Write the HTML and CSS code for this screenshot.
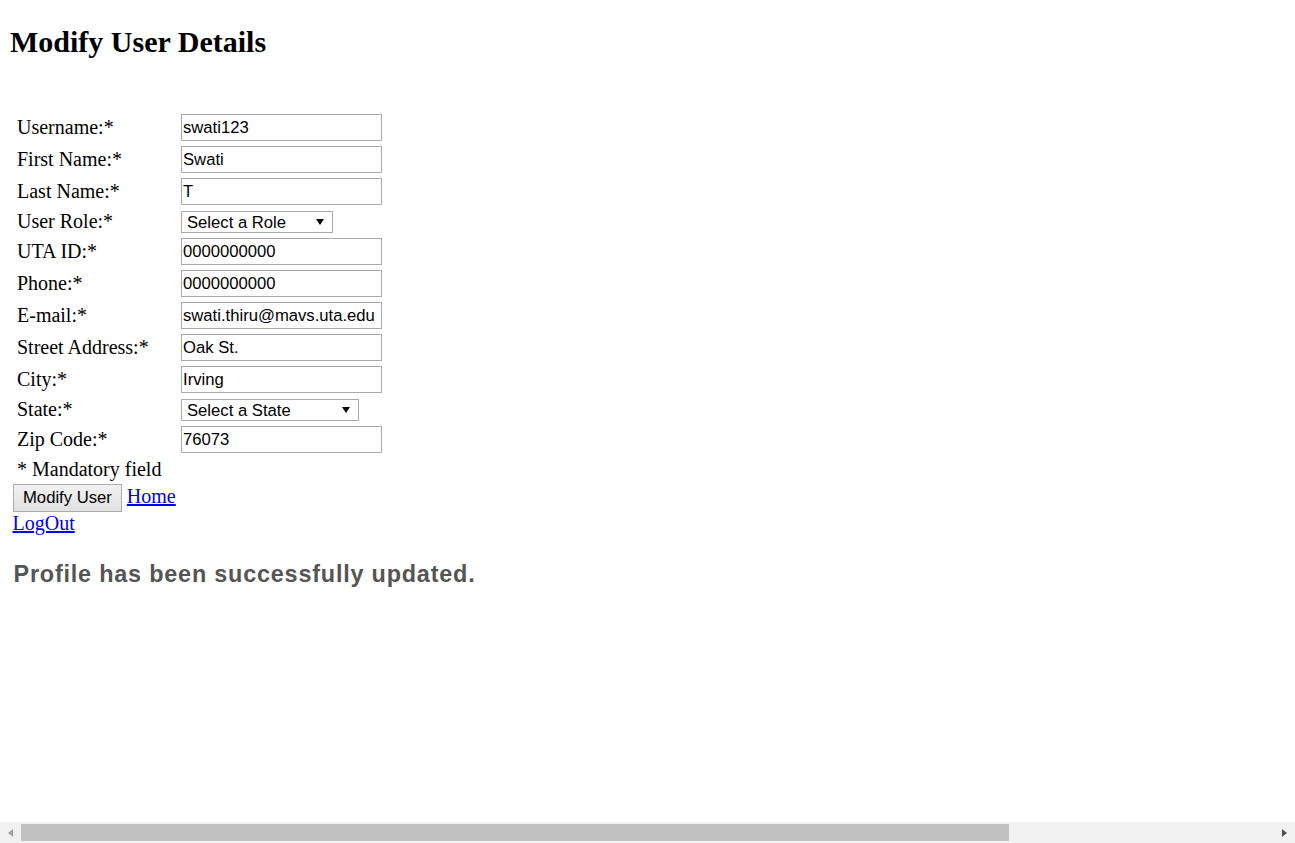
FILE: index.html
```html
<!DOCTYPE html>
<html lang="en">
<head>
<meta charset="utf-8">
<title>Modify User Details</title>
<link rel="stylesheet" href="styles.css">
</head>
<body>
<h2 class="title">Modify User Details</h2>
<form class="form">
  <div class="grid">
    <div class="row"><label class="lbl">Username:*</label><input class="field" type="text" value="swati123"></div>
    <div class="row"><label class="lbl">First Name:*</label><input class="field" type="text" value="Swati"></div>
    <div class="row"><label class="lbl">Last Name:*</label><input class="field" type="text" value="T"></div>
    <div class="row"><label class="lbl">User Role:*</label><span class="select-wrap"><select class="select role"><option>Select a Role</option></select></span></div>
    <div class="row"><label class="lbl">UTA ID:*</label><input class="field" type="text" value="0000000000"></div>
    <div class="row"><label class="lbl">Phone:*</label><input class="field" type="text" value="0000000000"></div>
    <div class="row"><label class="lbl">E-mail:*</label><input class="field" type="text" value="swati.thiru@mavs.uta.edu"></div>
    <div class="row"><label class="lbl">Street Address:*</label><input class="field" type="text" value="Oak St."></div>
    <div class="row"><label class="lbl">City:*</label><input class="field" type="text" value="Irving"></div>
    <div class="row"><label class="lbl">State:*</label><span class="select-wrap"><select class="select state"><option>Select a State</option></select></span></div>
    <div class="row"><label class="lbl">Zip Code:*</label><input class="field" type="text" value="76073"></div>
    <div class="row"><span class="lbl note">* Mandatory field</span></div>
  </div>
  <div class="actions"><button class="btn" type="button">Modify User</button> <a class="link" href="#">Home</a><br><a class="link" href="#">LogOut</a></div>
</form>
<h3 class="msg">Profile has been successfully updated.</h3>
<div class="hscroll">
  <span class="arrow-box left"><span class="arrow-left"></span></span>
  <span class="thumb"></span>
  <span class="track-rest"></span>
  <span class="arrow-box right"><span class="arrow-right"></span></span>
</div>
</body>
</html>
```

FILE: styles.css
```css
html, body {
  background: #fff;
}
body {
  margin: 0;
  font-family: "Liberation Serif", "Times New Roman", serif;
  font-size: 20px;
  line-height: 23px;
  color: #000;
}
.title {
  margin: 0;
  padding: 25px 0 0 10px;
  font-size: 30px;
  line-height: 34px;
  font-weight: bold;
}
.form {
  margin: 52.5px 0 0 12.5px;
}
.grid {
  display: flex;
  flex-direction: column;
}
.row {
  display: flex;
  align-items: center;
  padding: 2.5px 0;
}
.lbl {
  flex: 0 0 168.5px;
  box-sizing: border-box;
  padding-left: 4.5px;
  line-height: 23px;
  white-space: nowrap;
}
.note {
  flex: 0 0 auto;
}
.field {
  box-sizing: border-box;
  width: 201px;
  height: 27px;
  margin: 0;
  padding: 0 1px;
  border: 1px solid #a9a9a9;
  border-radius: 0;
  background: #fff;
  color: #000;
  font-family: "Liberation Sans", Arial, sans-serif;
  font-size: 16.67px;
  outline: none;
}
.select-wrap {
  position: relative;
  display: inline-block;
  line-height: 0;
}
.select {
  -webkit-appearance: none;
  appearance: none;
  box-sizing: border-box;
  height: 22px;
  margin: 0;
  padding: 1px 0 0 5px;
  border: 1px solid #a9a9a9;
  border-radius: 0;
  background: #fff;
  color: #000;
  font-family: "Liberation Sans", Arial, sans-serif;
  font-size: 16.67px;
  line-height: 20px;
  outline: none;
}
.select.role {
  width: 152px;
}
.select.state {
  width: 178px;
}
.select-wrap::after {
  content: "";
  position: absolute;
  right: 9px;
  top: 8.5px;
  width: 0;
  height: 0;
  border-left: 4px solid transparent;
  border-right: 4px solid transparent;
  border-top: 6.5px solid #000;
  pointer-events: none;
}
.actions {
  line-height: 23px;
}
.btn {
  box-sizing: border-box;
  height: 28px;
  margin: 0 0 0 0.5px;
  padding: 0 9px;
  border: 1px solid #adadad;
  border-radius: 0;
  background: linear-gradient(to bottom, #f2f2f2, #e0e0e0);
  color: #000;
  font-family: "Liberation Sans", Arial, sans-serif;
  font-size: 16.67px;
  vertical-align: baseline;
}
.link {
  color: #0000ee;
  text-decoration: underline;
}
.msg {
  margin: 26px 0 0 13.5px;
  font-family: "Liberation Sans", Arial, sans-serif;
  font-size: 23.4px;
  line-height: 27px;
  letter-spacing: 0.8px;
  font-weight: bold;
  color: #555555;
}
.hscroll {
  position: fixed;
  left: 0;
  right: 0;
  bottom: 0;
  height: 21px;
  background: #f1f1f1;
  display: flex;
  align-items: center;
}
.arrow-box {
  display: flex;
  align-items: center;
  justify-content: center;
  height: 21px;
}
.arrow-box.left {
  flex: 0 0 21px;
}
.arrow-box.right {
  flex: 0 0 21px;
}
.arrow-left {
  width: 0;
  height: 0;
  border-top: 4.5px solid transparent;
  border-bottom: 4.5px solid transparent;
  border-right: 5px solid #a3a3a3;
}
.arrow-right {
  width: 0;
  height: 0;
  border-top: 4.5px solid transparent;
  border-bottom: 4.5px solid transparent;
  border-left: 5px solid #505050;
}
.thumb {
  flex: 0 0 988px;
  height: 17px;
  background: #c1c1c1;
}
.track-rest {
  flex: 1 1 auto;
}
```
